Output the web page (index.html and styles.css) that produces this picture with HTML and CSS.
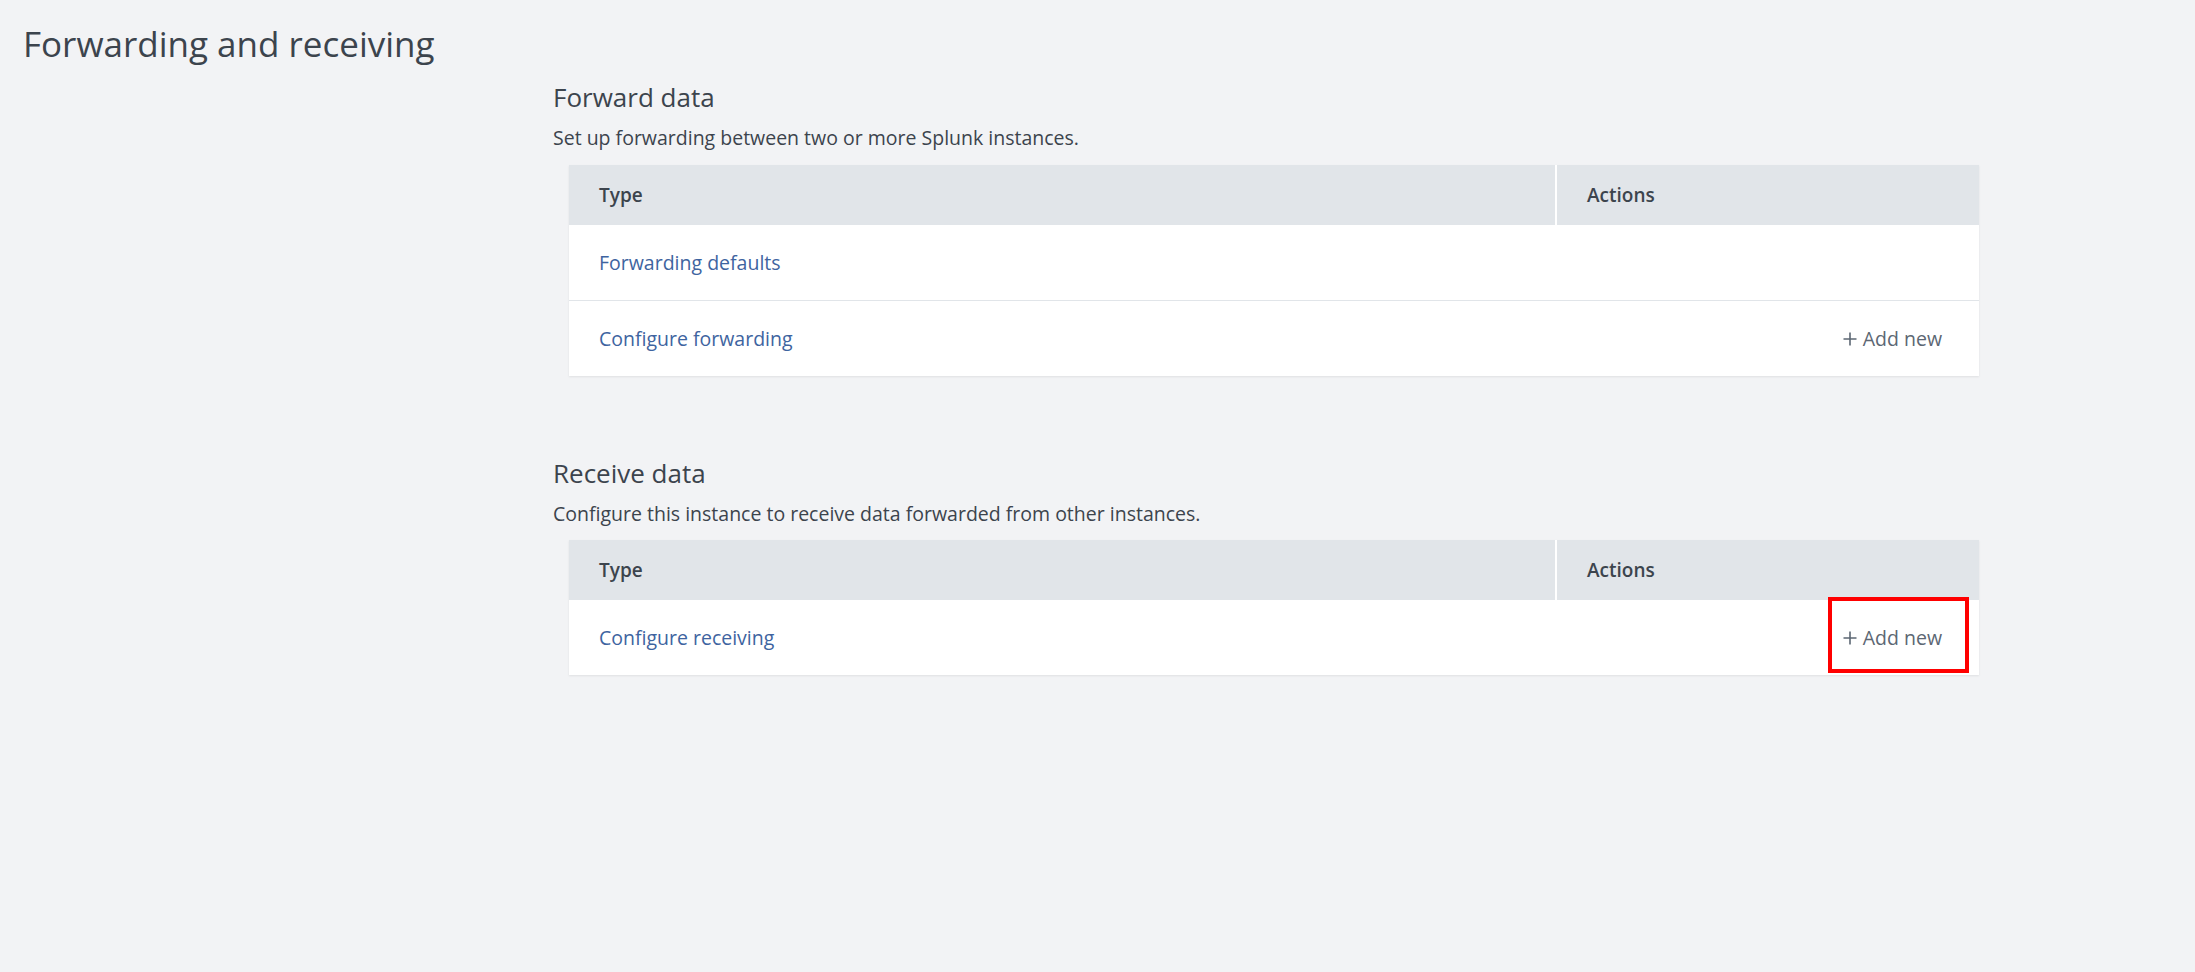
FILE: index.html
```html
<!DOCTYPE html>
<html>
<head>
<meta charset="utf-8">
<title>Forwarding and receiving</title>
<link rel="stylesheet" href="styles.css">
</head>
<body>
<div class="page">
  <h1 class="page-title">Forwarding and receiving</h1>
  <div class="content">
    <section class="section">
      <h2 class="section-title">Forward data</h2>
      <p class="section-desc">Set up forwarding between two or more Splunk instances.</p>
      <table class="grid">
        <thead>
          <tr><th class="col-type">Type</th><th class="col-actions">Actions</th></tr>
        </thead>
        <tbody>
          <tr><td><a class="link">Forwarding defaults</a></td><td class="actions"></td></tr>
          <tr><td><a class="link">Configure forwarding</a></td><td class="actions"><a class="add"><svg class="plus" viewBox="0 0 14 14" width="14" height="14"><path d="M7 0.5V13.5M0.5 7H13.5" stroke="#5c6773" stroke-width="1.6" fill="none"/></svg>Add new</a></td></tr>
        </tbody>
      </table>
    </section>
    <section class="section second">
      <h2 class="section-title">Receive data</h2>
      <p class="section-desc">Configure this instance to receive data forwarded from other instances.</p>
      <table class="grid">
        <thead>
          <tr><th class="col-type">Type</th><th class="col-actions">Actions</th></tr>
        </thead>
        <tbody>
          <tr><td><a class="link">Configure receiving</a></td><td class="actions highlight-cell"><a class="add"><svg class="plus" viewBox="0 0 14 14" width="14" height="14"><path d="M7 0.5V13.5M0.5 7H13.5" stroke="#5c6773" stroke-width="1.6" fill="none"/></svg>Add new</a><span class="highlight"></span></td></tr>
        </tbody>
      </table>
    </section>
  </div>
</div>
</body>
</html>
```

FILE: styles.css
```css
html, body {
  margin: 0;
  padding: 0;
  background: #f2f3f5;
}
body {
  font-family: "Open Sans", "Liberation Sans", sans-serif;
  color: #3c444d;
  width: 2195px;
  height: 972px;
  overflow: hidden;
}
.page {
  padding: 22px 0 0 23px;
}
.page-title {
  margin: 0;
  font-size: 35px;
  font-weight: 400;
  line-height: 44px;
  color: #3c444d;
}
.content {
  margin-left: 530px;
  width: 1446px;
}
.section {
  padding-top: 15px;
}
.section.second {
  padding-top: 81px;
}
.section-title {
  margin: 0;
  font-size: 26px;
  font-weight: 400;
  line-height: 32px;
  color: #3c444d;
}
.section-desc {
  margin: 13px 0 0 0;
  font-size: 19.5px;
  line-height: 24px;
  color: #3c444d;
}
.grid {
  margin: 15px 0 0 16px;
  width: 1410px;
  border-collapse: collapse;
  background: #fff;
  box-shadow: 0 1px 2px rgba(0,0,0,0.08);
}
.second .grid {
  margin-top: 14px;
}
.grid th {
  background: #e1e5e9;
  height: 60px;
  padding: 0 0 0 30px;
  text-align: left;
  font-size: 19px;
  font-weight: 600;
  color: #3c444d;
}
.grid th.col-type {
  width: 956px;
  border-right: 2px solid #fff;
}
.grid th.col-actions {
  padding-left: 30px;
}
.grid td {
  height: 75px;
  padding: 0 0 0 30px;
  font-size: 19.5px;
  border-top: 1px solid #e1e5e9;
}
.grid tbody tr:first-child td {
  border-top: none;
}
.link {
  color: #3e64a0;
}
.actions {
  text-align: right;
  padding-right: 37px !important;
}
.add {
  color: #5c6773;
  display: inline-flex;
  align-items: center;
  gap: 6px;
}
.plus {
  display: block;
}
.highlight-cell {
  position: relative;
}
.highlight {
  position: absolute;
  right: 10px;
  top: -3px;
  width: 133px;
  height: 68px;
  border: 4px solid #ff0000;
}
```
